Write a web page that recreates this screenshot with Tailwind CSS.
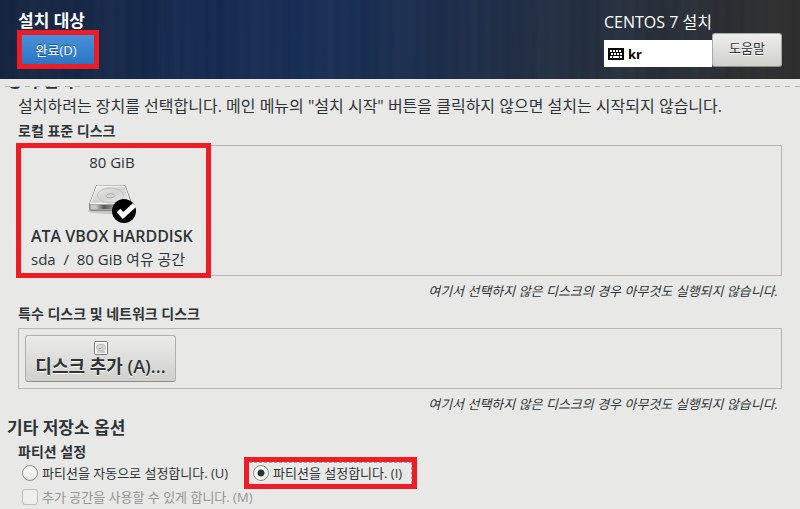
<!DOCTYPE html>
<html lang="ko" class="h-full">

<head>
    <title>설치 대상</title>
    <meta charset="utf-8" />
    <meta name="viewport" content="width=device-width, initial-scale=1.0" />
    <script src="https://cdn.jsdelivr.net/npm/@tailwindcss/browser@4"></script>
</head>

<body class="h-full overflow-hidden bg-[#e8e8e6] font-['Open_Sans','Noto_Sans_CJK_KR',sans-serif] text-[#2e3436]">
    <header
        class="flex justify-between pl-[17px] pr-[18px] pb-[10px] text-white bg-[repeating-linear-gradient(90deg,#ffffff00_0px,#ffffff05_37px,#ffffff00_73px),repeating-linear-gradient(90deg,#ffffff00_0px,#ffffff03_7px,#ffffff00_13px),linear-gradient(100deg,#15243d_0%,#14284d_22%,#162d55_40%,#1d2c46_60%,#252e3b_78%,#2c2c2d_95%)]">
        <div class="flex flex-col items-start pt-3">
            <h1 class="pl-px text-[17px] leading-[18px] font-bold">설치 대상</h1>
            <div class="border-5 border-[#ee1c25]">
                <button type="button"
                    class="block h-[29px] w-18 bg-linear-to-b from-[#4a90d9] to-[#2a76c6] pr-1 text-[13px] leading-7 text-shadow-[0_-1px_#1c5187]">완료(D)</button>
            </div>
        </div>
        <div class="flex items-end pb-[2px]">
            <div class="w-27">
                <p class="mb-2 text-base leading-5 whitespace-nowrap">CENTOS 7 설치</p>
                <div class="flex h-[27px] items-center gap-1 bg-white pl-1 text-black">
                    <svg class="h-3 w-4" viewBox="0 0 16 12" shape-rendering="crispEdges">
                        <rect width="16" height="12" rx="1" />
                        <path stroke="#fff" stroke-width="2" stroke-dasharray="2 1" d="M2 3h12M3 6h11" />
                        <path stroke="#fff" stroke-width="2" d="M2 9h2M5 9h6M12 9h2" />
                    </svg>
                    <span class="text-[13px] leading-5 font-bold">kr</span>
                </div>
            </div>
            <button type="button"
                class="h-[34px] w-[70px] rounded-[3px] border border-[#a7aba7] border-b-[#8b8e8b] bg-linear-to-b from-[#ededeb] to-[#d0d0cd] pb-[2px] text-[13px] text-[#2e3436] text-shadow-[0_1px_#fff]">도움말</button>
        </div>
    </header>

    <main class="pt-[7px]">
        <!-- scrolled-off heading under the dashed edge -->
        <svg class="block h-px w-full">
            <line x1="5" x2="100%" y1="0.5" y2="0.5" stroke="#b4b4b2" stroke-dasharray="5 5" />
        </svg>
        <div class="flex h-1 items-end overflow-hidden pl-[7px]">
            <h2 class="shrink-0 text-[17px] leading-5 font-bold">장치 선택</h2>
        </div>

        <div class="px-[18px]">
            <p class="pt-[3px] text-base leading-6 whitespace-nowrap">설치하려는 장치를 선택합니다. 메인 메뉴의 "설치 시작" 버튼을 클릭하지 않으면 설치는 시작되지 않습니다.</p>
            <h3 class="pt-1 pb-[5px] text-sm leading-[18px] font-bold">로컬 표준 디스크</h3>
            <div class="relative border border-[#b6b6b3] py-1 pl-3">
                <div class="absolute -top-[3px] -left-[3px] h-[135px] w-[195px] border-5 border-[#ee1c25]"></div>
                <div class="flex w-fit flex-col items-center text-[15px] leading-6 whitespace-nowrap">
                    <p>80 GiB</p>
                    <svg class="mt-[6px] h-11 w-12" viewBox="0 0 48 44">
                        <defs>
                            <linearGradient id="top" x1="0" y1="0" x2="1" y2="1">
                                <stop offset="0" stop-color="#f4f4f3" />
                                <stop offset=".5" stop-color="#d2d2d0" />
                                <stop offset="1" stop-color="#f0f0ef" />
                            </linearGradient>
                            <linearGradient id="front">
                                <stop offset="0" stop-color="#c8c8c6" />
                                <stop offset=".4" stop-color="#555" />
                                <stop offset="1" stop-color="#aaa" />
                            </linearGradient>
                        </defs>
                        <ellipse cx="22" cy="31" rx="22" ry="3" fill="#000" opacity=".15" />
                        <path d="M8.500 5.500H37L43.500 23V30.500H3.500Q1.500 30.500 1.500 28.500V24Z" fill="#a5a5a3" stroke="#858583" />
                        <path d="M9 6H36.500L42.500 23.500H2.500Z" fill="url(#top)" stroke="#fff" />
                        <path d="M3 25H42V29H3Z" fill="#c9c9c7" />
                        <path d="M8 25H28V29H8Z" fill="url(#front)" />
                        <ellipse cx="22.500" cy="15.500" rx="13" ry="7.500" fill="none" stroke="#c0c0be" />
                        <path d="M18 15.500Q18 18 22 18T27 15.500M19 14.500Q22 13 26 14.500" fill="none" stroke="#aaaaa8" />
                        <circle cx="36" cy="31" r="12" />
                        <path d="M30.500 30.500l4.500 5L46.500 25" fill="none" stroke="#fff" stroke-width="5" />
                    </svg>
                    <p class="text-base leading-6 font-semibold">ATA VBOX HARDDISK</p>
                    <p class="-mt-px self-start">sda&nbsp; /&nbsp; 80 GiB 여유 공간</p>
                </div>
            </div>
            <p class="pt-[3px] pr-1 text-right text-[13px] leading-6 italic">여기서 선택하지 않은 디스크의 경우 아무것도 실행되지 않습니다.</p>

            <h3 class="pt-[2px] pb-[5px] text-sm leading-[18px] font-bold">특수 디스크 및 네트워크 디스크</h3>
            <div class="border border-[#b6b6b3] p-[6px]">
                <button type="button"
                    class="flex h-[47px] w-[151px] flex-col items-center rounded-[3px] border border-[#b0b0ad] border-b-[#8e8e8b] bg-linear-to-b from-[#ebebe9] to-[#d0d0cd] pt-[5px] text-[18px] leading-[22px] font-semibold whitespace-nowrap text-shadow-[0_1px_#fff]">
                    <svg class="h-[14px] w-[14px] shrink-0" viewBox="0 0 14 14">
                        <rect x=".5" y=".5" width="13" height="13" rx="1" fill="#ececea" stroke="#777" />
                        <rect x="1.500" y="1.500" width="11" height="11" fill="none" stroke="#fff" />
                        <ellipse cx="7" cy="6.500" rx="4.500" ry="3" fill="#d8d8d6" stroke="#bbb" />
                        <path d="M5 7.500Q7 8.500 9 5.500M3 11h8" fill="none" stroke="#aaa" />
                    </svg>
                    <span>디스크 추가 (A)...</span>
                </button>
            </div>
            <p class="pt-[3px] pr-1 text-right text-[13px] leading-6 italic">여기서 선택하지 않은 디스크의 경우 아무것도 실행되지 않습니다.</p>
        </div>

        <h2 class="pl-[7px] text-[17px] leading-6 font-bold">기타 저장소 옵션</h2>
        <div class="px-[18px] text-[13px] leading-4">
            <h3 class="pt-[3px] text-sm leading-[18px] font-bold">파티션 설정</h3>
            <div class="-mt-1 flex items-center whitespace-nowrap">
                <label class="flex w-[226px] items-center gap-1 pl-1">
                    <input type="radio" name="partitioning"
                        class="size-4 appearance-none rounded-full border border-[#8f918e] bg-linear-to-b from-white to-[#e6e6e4]" />
                    파티션을 자동으로 설정합니다. (U)
                </label>
                <div class="border-5 border-[#ee1c25]">
                    <label class="flex h-[22px] w-[163px] items-center gap-1 border border-dashed border-[#a8a8a6] border-b-transparent border-l-transparent pl-[3px]">
                        <input type="radio" name="partitioning" checked
                            class="size-4 appearance-none rounded-full border border-[#8f918e] bg-linear-to-b from-white to-[#e6e6e4] checked:bg-[radial-gradient(circle,#2e3436_3px,#f6f6f5_4px)]" />
                        파티션을 설정합니다. (I)
                    </label>
                </div>
            </div>
            <label class="flex w-fit items-center gap-1 pl-1 text-[#949694]">
                <input type="checkbox" disabled class="size-4 appearance-none rounded-[3px] border border-[#bcbebb] bg-[#eeeeec]" />
                추가 공간을 사용할 수 있게 합니다. (M)
            </label>
        </div>
    </main>
</body>

</html>
